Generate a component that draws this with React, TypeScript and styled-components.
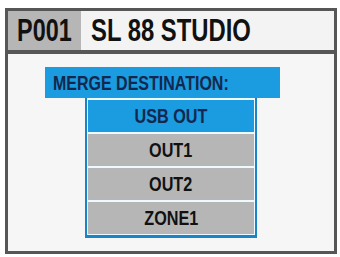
import styled, { createGlobalStyle } from 'styled-components';

const FONT = `"Liberation Sans", Arial, sans-serif`;

const GlobalStyle = createGlobalStyle`
  html, body {
    margin: 0;
    padding: 0;
    background: #ffffff;
  }
  body {
    font-family: ${FONT};
  }
`;

const DESTINATIONS = ['USB OUT', 'OUT1', 'OUT2', 'ZONE1'];
const SELECTED = 0;

interface RowProps {
  $selected: boolean;
}

interface NarrowProps {
  $scale: number;
  $origin?: 'left' | 'center';
}

const App = () => {
  return (
    <>
      <GlobalStyle />
      <Frame>
        <Header>
          <Code>
            <Narrow $scale={0.73}>P001</Narrow>
          </Code>
          <Name>
            <Narrow $scale={0.745} $origin="left">
              SL 88 STUDIO
            </Narrow>
          </Name>
        </Header>
        <Body>
          <Title>
            <Narrow $scale={0.8} $origin="left">
              MERGE DESTINATION:
            </Narrow>
          </Title>
          <List>
            {DESTINATIONS.map((d, i) => (
              <Row key={d} $selected={i === SELECTED}>
                <Narrow $scale={0.81}>{d}</Narrow>
              </Row>
            ))}
          </List>
        </Body>
      </Frame>
    </>
  );
};

// the display font is a condensed grotesque, squeeze Liberation Sans to match
const Narrow = styled.span<NarrowProps>`
  display: inline-block;
  white-space: nowrap;
  transform: scaleX(${({ $scale }) => $scale});
  transform-origin: ${({ $origin }) => $origin || 'center'};
`;

const Frame = styled.div`
  margin: 8px 0 0 5px;
  width: 326px;
  height: 240px;
  border: 3px solid #565656;
  background: #f6f6f6;
  display: flex;
  flex-direction: column;
`;

const Header = styled.div`
  display: flex;
  height: 39px;
  border-bottom: 4px solid #575757;
  background: #f3f3f3;
  font-weight: 700;
  font-size: 32px;
  color: #111;
`;

const Code = styled.div`
  width: 73px;
  background: #b6b6b6;
  display: flex;
  align-items: center;
  justify-content: center;
`;

const Name = styled.div`
  display: flex;
  align-items: center;
  padding-left: 10px;
`;

const Body = styled.div`
  flex: 1;
  padding: 13px 0 0 37px;
  display: flex;
  flex-direction: column;
`;

const Title = styled.div`
  width: 235px;
  height: 31px;
  padding: 2px 0 0 8px;
  box-sizing: border-box;
  background: #1b9be0;
  color: #13284e;
  font-weight: 700;
  font-size: 20px;
  display: flex;
  align-items: center;
`;

const List = styled.div`
  margin-left: 40px;
  width: 166px;
  border: 2px solid #1a85c6;
  border-top: 0;
  border-bottom-width: 3px;
  padding: 2px 1px 1px;
  background: #eefaff;
  display: flex;
  flex-direction: column;
  gap: 2px;
`;

const Row = styled.div<RowProps>`
  height: 32px;
  display: flex;
  align-items: center;
  justify-content: center;
  font-weight: 700;
  font-size: 20px;
  background: ${({ $selected }) => ($selected ? '#1b9be0' : '#b6b6b6')};
  color: ${({ $selected }) => ($selected ? '#13284e' : '#111')};
`;

export default App;
